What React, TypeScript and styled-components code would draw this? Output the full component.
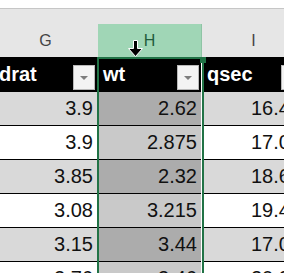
import styled, {createGlobalStyle} from "styled-components";

const GlobalStyle = createGlobalStyle`
    body {
        margin: 0;
        background: #fff;
        overflow: hidden;
    }
`;

const Sheet = styled.div`
    position: relative;
    width: 284px;
    height: 273px;
    overflow: hidden;
    display: flex;
    flex-direction: column;
    font-family: "Liberation Sans", Arial, sans-serif;
`;

const TopStrip = styled.div`
    height: 8px;
    flex-shrink: 0;
    background: #fff;
    border-bottom: 1px solid #c6c6c6;
`;

const Band = styled.div`
    background: #e6e6e6;
    padding-top: 15px;
    flex-shrink: 0;
`;

const Grid = styled.div`
    display: grid;
    grid-template-columns: repeat(3, 104px);
    margin-left: -6px;
    flex-shrink: 0;
`;

const Letter = styled.div<{ $active?: boolean }>`
    height: 33px;
    display: flex;
    align-items: center;
    justify-content: center;
    font-size: 16px;
    color: ${p => p.$active ? "#1f5c3c" : "#444"};
    background: ${p => p.$active ? "#a0d6b6" : "#e6e6e6"};
    border-right: 1px solid ${p => p.$active ? "#8fc4a5" : "#e6e6e6"};
`;

const HeaderRow = styled(Grid)`
    background: #000;
    height: 34px;
    border-bottom: 1px solid #000;
`;

const HeadCell = styled.div`
    display: flex;
    align-items: center;
    justify-content: space-between;
    padding-left: 5px;
    color: #fff;
    font-weight: bold;
    font-size: 20px;
`;

const FilterButton = styled.div`
    align-self: flex-end;
    width: 20px;
    height: 23px;
    margin-right: 3px;
    margin-bottom: 1px;
    background: #f3f3f3;
    border: 1px solid #b9b9b9;
    display: flex;
    align-items: center;
    justify-content: center;

    &::after {
        content: "";
        border-left: 4px solid transparent;
        border-right: 4px solid transparent;
        border-top: 4px solid #7d7d7d;
    }
`;

const DataRow = styled(Grid)`
    height: 33px;
    border-bottom: 1px solid #000;
`;

const shades = {
  band: ["#d9d9d9", "#acacac"],
  plain: ["#ffffff", "#c9c9c9"]
};

const Cell = styled.div<{ $banded: boolean; $selected?: boolean }>`
    display: flex;
    align-items: center;
    justify-content: flex-end;
    padding-right: 5px;
    font-size: 20px;
    color: #111;
    background: ${p => shades[p.$banded ? "band" : "plain"][p.$selected ? 1 : 0]};
`;

const SelectionFrame = styled.div`
    position: absolute;
    left: 97px;
    top: 57px;
    width: 103px;
    height: 240px;
    border: 2px solid #217346;
    box-shadow: inset -1px 0 0 #fff;
    pointer-events: none;
`;

const FillHandle = styled.div`
    position: absolute;
    right: -4px;
    top: -2px;
    width: 6px;
    height: 6px;
    background: #217346;
`;

const Cursor = styled.svg`
    position: absolute;
    left: 128px;
    top: 40px;
`;

const columns = ["G", "H", "I"];
const fields = ["drat", "wt", "qsec"];

const rows = [
  ["3.9", "2.62", "16.46"],
  ["3.9", "2.875", "17.02"],
  ["3.85", "2.32", "18.61"],
  ["3.08", "3.215", "19.44"],
  ["3.15", "3.44", "17.02"],
  ["2.76", "3.46", "20.22"]
];

export default function App() {
  return (
    <>
      <GlobalStyle/>
      <Sheet>
        <TopStrip/>
        <Band>
          <Grid>
            {columns.map(c => <Letter key={c} $active={c === "H"}>{c}</Letter>)}
          </Grid>
        </Band>
        <HeaderRow>
          {fields.map(f => (
            <HeadCell key={f}>
              {f}
              <FilterButton/>
            </HeadCell>
          ))}
        </HeaderRow>
        {rows.map((r, i) => (
          <DataRow key={i}>
            {r.map((v, j) => (
              <Cell key={j} $banded={i % 2 === 0} $selected={j === 1}>{v}</Cell>
            ))}
          </DataRow>
        ))}
        <SelectionFrame>
          <FillHandle/>
        </SelectionFrame>
        <Cursor width="15" height="18" viewBox="0 0 15 18">
          <polygon points="5.5,0.5 9.5,0.5 9.5,8.5 14.5,8.5 7.5,16.5 0.5,8.5 5.5,8.5" fill="#000" stroke="#fff" strokeWidth="1"/>
        </Cursor>
      </Sheet>
    </>
  );
}
